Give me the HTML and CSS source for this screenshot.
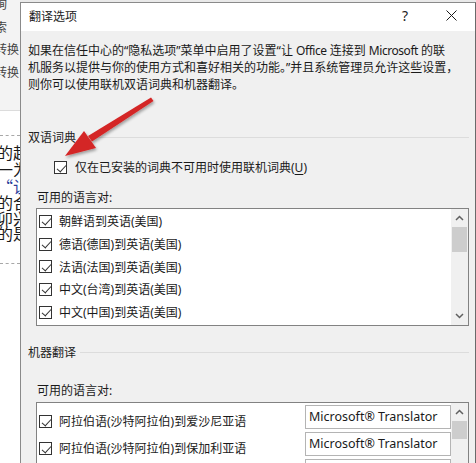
FILE: index.html
```html
<!DOCTYPE html>
<html lang="zh-CN">
<head>
<meta charset="utf-8">
<title>翻译选项</title>
<link rel="stylesheet" href="styles.css">
</head>
<body>
<div class="screen">
  <aside class="bg">
    <div class="ribbon">
      <span class="rb first">询</span>
      <span class="rb">索</span>
      <span class="rb">转换</span>
      <span class="rb">转换</span>
    </div>
    <div class="doc">
      <div class="dash"></div>
      <div class="doc-text">
        <span class="dl">的起</span>
        <span class="dl">一为</span>
        <span class="dl"><span class="link">“让</span></span>
        <span class="dl tight">的合</span>
        <span class="dl tight">卯兴</span>
        <span class="dl tight">的是</span>
      </div>
      <div class="dash second"></div>
    </div>
  </aside>

  <section class="dialog">
    <header class="titlebar">
      <span class="title">翻译选项</span>
      <span class="help">?</span>
      <svg class="close" width="11" height="11" viewBox="0 0 11 11"><path d="M0.5 0.5 L10.5 10.5 M10.5 0.5 L0.5 10.5" stroke="#1a1a1a" stroke-width="1" fill="none"/></svg>
    </header>
    <div class="body">
      <p class="intro">如果在信任中心的“隐私选项”菜单中启用了设置“让 <span class="lat">Office</span> 连接到 <span class="lat">Microsoft</span> 的联<br>机服务以提供与你的使用方式和喜好相关的功能。”并且系统管理员允许这些设置，<br>则你可以使用联机双语词典和机器翻译。</p>

      <div class="group-head first"><span>双语词典</span><i class="rule"></i></div>
      <label class="opt"><span class="cb"></span><span>仅在已安装的词典不可用时使用联机词典(<u>U</u>)</span></label>
      <div class="sub">可用的语言对:</div>
      <div class="list dict">
        <div class="items">
          <div class="row"><span class="cb"></span><span>朝鲜语到英语(美国)</span></div>
          <div class="row"><span class="cb"></span><span>德语(德国)到英语(美国)</span></div>
          <div class="row"><span class="cb"></span><span>法语(法国)到英语(美国)</span></div>
          <div class="row"><span class="cb"></span><span>中文(台湾)到英语(美国)</span></div>
          <div class="row"><span class="cb"></span><span>中文(中国)到英语(美国)</span></div>
        </div>
        <div class="scroll">
          <svg class="sarrow" width="9" height="6" viewBox="0 0 9 6"><path d="M1 5 L4.5 1.5 L8 5" stroke="#606060" stroke-width="1.5" fill="none"/></svg>
          <div class="thumb t1"></div>
          <div class="track"></div>
          <svg class="sarrow" width="9" height="6" viewBox="0 0 9 6"><path d="M1 1 L4.5 4.5 L8 1" stroke="#606060" stroke-width="1.5" fill="none"/></svg>
        </div>
      </div>

      <div class="group-head second"><span>机器翻译</span><i class="rule"></i></div>
      <div class="sub sub2">可用的语言对:</div>
      <div class="list mt">
        <div class="items">
          <div class="row2"><span class="lbl"><span class="cb"></span><span>阿拉伯语(沙特阿拉伯)到爱沙尼亚语</span></span><span class="combo">Microsoft® Translator</span></div>
          <div class="row2"><span class="lbl"><span class="cb"></span><span>阿拉伯语(沙特阿拉伯)到保加利亚语</span></span><span class="combo">Microsoft® Translator</span></div>
          <div class="row2"><span class="lbl"><span class="cb"></span><span>阿拉伯语(沙特阿拉伯)到加泰罗尼亚语</span></span><span class="combo">Microsoft® Translator</span></div>
        </div>
        <div class="scroll">
          <svg class="sarrow" width="9" height="6" viewBox="0 0 9 6"><path d="M1 5 L4.5 1.5 L8 5" stroke="#606060" stroke-width="1.5" fill="none"/></svg>
          <div class="thumb t2"></div>
          <div class="track"></div>
        </div>
      </div>
    </div>
  </section>

  <svg class="arrow" width="476" height="463" viewBox="0 0 476 463">
    <defs>
      <filter id="sh" x="-20%" y="-20%" width="140%" height="140%">
        <feGaussianBlur in="SourceAlpha" stdDeviation="1.5"/>
        <feOffset dx="1" dy="2" result="b"/>
        <feComponentTransfer><feFuncA type="linear" slope="0.35"/></feComponentTransfer>
        <feMerge><feMergeNode/><feMergeNode in="SourceGraphic"/></feMerge>
      </filter>
    </defs>
    <g filter="url(#sh)" fill="#d42525">
      <polygon points="151,97.5 153.5,101 92,141.5 88,136"/>
      <polygon points="65,156 84,131 96,148"/>
    </g>
  </svg>
</div>
</body>
</html>
```
FILE: styles.css
```css
* { box-sizing: border-box; }
html, body { margin: 0; padding: 0; }
body {
  width: 476px;
  height: 463px;
  overflow: hidden;
  font-family: "Noto Sans", "Noto Sans CJK SC", sans-serif;
  font-size: 12px;
  color: #000;
  background: #f3f3f3;
}
.screen {
  position: relative;
  display: flex;
  height: 463px;
  background: #e9e9e9;
}

/* background document strip */
.bg {
  width: 20px;
  flex: none;
  display: flex;
  flex-direction: column;
  overflow: hidden;
}
.ribbon {
  height: 111px;
  flex: none;
  background: #f3f3f3;
  border-bottom: 1px solid #dcdcdc;
  display: flex;
  flex-direction: column;
}
.rb {
  font-family: "Noto Sans CJK SC", sans-serif;
  font-size: 12px;
  line-height: 22.5px;
  color: #444;
  white-space: nowrap;
  margin-left: -5px;
}
.rb.first { margin-top: -7px; }
.doc {
  flex: 1;
  background: #fff;
  display: flex;
  flex-direction: column;
}
.dash {
  margin-top: 24px;
  border-top: 1px dashed #a8a8a8;
}
.dash.second { margin-top: 21px; }
.doc-text {
  display: flex;
  flex-direction: column;
  padding-top: 8px;
}
.dl {
  font-family: "Noto Sans CJK SC", sans-serif;
  font-size: 16px;
  line-height: 17px;
  color: #1a1a1a;
  white-space: nowrap;
  margin-left: -3px;
}
.dl.tight { line-height: 15.5px; }
.link { color: #2a3d9a; }

/* dialog */
.dialog {
  flex: 1;
  margin-top: 2px;
  border: 1px solid #8a8a8a;
  border-right-color: #6a6a6a;
  border-bottom: none;
  background: #f0f0f0;
  display: flex;
  flex-direction: column;
}
.titlebar {
  height: 28px;
  flex: none;
  background: #fff;
  display: flex;
  align-items: flex-start;
  padding: 4px 0 0 8px;
}
.title {
  flex: 1;
  font-family: "Noto Sans CJK SC", sans-serif;
  font-size: 12px;
  line-height: 17px;
  color: #222;
}
.help {
  font-family: "Noto Sans", sans-serif;
  font-size: 14px;
  line-height: 17px;
  color: #222;
  margin-right: 38px;
}
.close {
  margin: 3px 18px 0 0;
}
.body {
  flex: 1;
  display: flex;
  flex-direction: column;
  padding: 11px 6px 0 7px;
}
.intro {
  margin: 0;
  line-height: 17px;
  white-space: nowrap;
  color: #1a1a1a;
}
.lat { letter-spacing: -0.45px; }
.group-head {
  display: flex;
  align-items: center;
  line-height: 17px;
  color: #222;
}
.group-head.first { margin-top: 36px; }
.group-head.second { margin-top: 18px; }
.rule {
  flex: 1;
  height: 1px;
  background: #dcdcdc;
  margin-left: 4px;
}
.opt {
  display: flex;
  align-items: center;
  gap: 8px;
  margin: 13px 0 0 26px;
  line-height: 17px;
  color: #1a1a1a;
}
.opt u { text-decoration-thickness: 1px; text-underline-offset: 2px; }
.sub {
  margin: 13px 0 0 9px;
  line-height: 17px;
  color: #1a1a1a;
}
.sub.sub2 { margin-top: 21px; }

.cb {
  position: relative;
  flex: none;
  width: 13px;
  height: 13px;
  border: 1px solid #333;
  background: #fff;
}
.cb::after {
  content: "";
  position: absolute;
  left: 3.5px;
  top: 0.5px;
  width: 4px;
  height: 8px;
  border: solid #333;
  border-width: 0 1.3px 1.3px 0;
  transform: rotate(42deg);
}

.list {
  display: flex;
  margin: 2px 0 0 8px;
  background: #fff;
  border: 1px solid #828282;
}
.list.dict { height: 118px; }
.list.mt { margin-top: 3px; flex: 1; border-bottom: none; }
.items {
  flex: 1;
  display: flex;
  flex-direction: column;
  overflow: hidden;
}
.dict .items { padding-top: 1px; }
.row {
  height: 22.7px;
  flex: none;
  display: flex;
  align-items: center;
  gap: 7px;
  padding-left: 2px;
  color: #1a1a1a;
  white-space: nowrap;
}
.row2 {
  height: 27px;
  flex: none;
  display: flex;
  align-items: flex-start;
  padding-top: 2px;
  color: #1a1a1a;
  white-space: nowrap;
}
.lbl {
  flex: 1;
  display: flex;
  align-items: center;
  gap: 7px;
  padding: 8px 0 0 2px;
  line-height: 17px;
}
.combo {
  width: 146px;
  height: 24px;
  flex: none;
  border: 1px solid #b4b4b4;
  background: #fff;
  padding-left: 3px;
  font-family: "Noto Sans", sans-serif;
  font-size: 12.5px;
  line-height: 21px;
  color: #1a1a1a;
}
.scroll {
  width: 17px;
  flex: none;
  background: #f0f0f0;
  display: flex;
  flex-direction: column;
  align-items: center;
}
.sarrow { flex: none; margin: 6px 0 5px; }
.thumb {
  width: 15px;
  background: #cdcdcd;
  flex: none;
}
.thumb.t1 { height: 25px; margin-top: 1px; }
.thumb.t2 { height: 18px; margin-top: 1px; }
.track { flex: 1; }
.scroll .sarrow:last-child { margin: 3px 0 6px; }

.arrow {
  position: absolute;
  left: 0;
  top: 0;
  pointer-events: none;
}
```
